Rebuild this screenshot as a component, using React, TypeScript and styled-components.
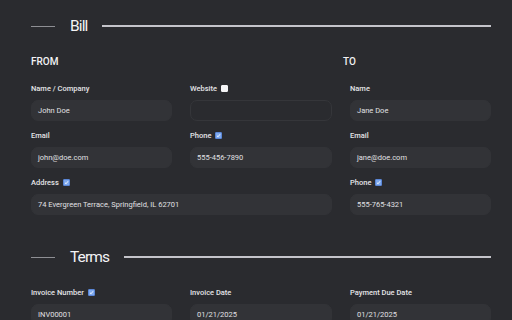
import styled, { createGlobalStyle } from 'styled-components';

const GlobalStyle = createGlobalStyle`
  html, body {
    margin: 0;
    padding: 0;
    background: #2a2b2f;
  }
  body {
    font-family: Roboto, "Noto Sans", sans-serif;
    color: #e8e8ea;
  }
`;

const Page = styled.div`
  width: 512px;
  height: 320px;
  overflow: hidden;
  box-sizing: border-box;
  padding: 16px 21px 0 31px;
  background: #2a2b2f;
`;

const SectionTitle = styled.div<{ $gapAfter: number }>`
  display: flex;
  align-items: center;
  height: 20px;
  margin-bottom: ${(p) => p.$gapAfter}px;

  &::before {
    content: '';
    width: 24px;
    height: 1px;
    background: #8e8f94;
    margin-right: 15px;
  }

  &::after {
    content: '';
    flex: 1;
    height: 1.5px;
    background: #c4c4ca;
    margin-left: 15px;
  }
`;

const TitleText = styled.span`
  font-size: 15.5px;
  font-weight: 400;
  color: #f4f4f6;
  letter-spacing: -0.9px;
`;

const PartyHeads = styled.div`
  display: grid;
  grid-template-columns: 312px 1fr;
  margin-bottom: 15px;
`;

const PartyHead = styled.div`
  font-size: 10px;
  font-weight: 500;
  line-height: 12px;
  color: #f2f2f4;
`;

const Grid = styled.div`
  display: grid;
  grid-template-columns: 141px 142px 141px;
  column-gap: 18px;
  row-gap: 9px;
`;

const Field = styled.div<{ $span?: number }>`
  display: flex;
  flex-direction: column;
  gap: 7px;
  grid-column: span ${(p) => p.$span ?? 1};
`;

const Label = styled.div`
  display: flex;
  align-items: center;
  gap: 4px;
  height: 10px;
  font-size: 7.5px;
  font-weight: 500;
  color: #e4e4e7;
`;

const Box = styled.span<{ $checked: boolean }>`
  display: inline-flex;
  align-items: center;
  justify-content: center;
  width: 7px;
  height: 7px;
  border-radius: 1px;
  box-sizing: border-box;
  background: ${(p) => (p.$checked ? '#7ea9ee' : '#f4f4f6')};
  border: 1px solid ${(p) => (p.$checked ? '#5a86d6' : '#f4f4f6')};
`;

const Input = styled.div<{ $disabled?: boolean }>`
  height: 21px;
  box-sizing: border-box;
  display: flex;
  align-items: center;
  padding: 0 6px;
  border-radius: 7px;
  font-size: 7.5px;
  color: #e0e0e3;
  background: ${(p) => (p.$disabled ? '#2a2b2f' : '#323337')};
  border: 1px solid ${(p) => (p.$disabled ? '#35363a' : '#323337')};
`;

const Spacer = styled.div`
  height: 32px;
`;

const Check = ({ checked }: { checked: boolean }) => (
  <Box $checked={checked}>
    {checked && (
      <svg width="5" height="5" viewBox="0 0 10 10">
        <path d="M2 5.5 L4.2 7.5 L8 2.5" fill="none" stroke="#ffffff" strokeWidth="1.8" />
      </svg>
    )}
  </Box>
);

type FieldProps = {
  label: string;
  value?: string;
  check?: boolean;
  span?: number;
  disabled?: boolean;
};

const FormField = ({ label, value, check, span, disabled }: FieldProps) => (
  <Field $span={span}>
    <Label>
      {label}
      {check !== undefined && <Check checked={check} />}
    </Label>
    <Input $disabled={disabled}>{value}</Input>
  </Field>
);

export const App = () => {
  return (
    <>
      <GlobalStyle />
      <Page>
        <SectionTitle $gapAfter={20}>
          <TitleText>Bill</TitleText>
        </SectionTitle>
        <PartyHeads>
          <PartyHead>FROM</PartyHead>
          <PartyHead>TO</PartyHead>
        </PartyHeads>
        <Grid>
          <FormField label="Name / Company" value="John Doe" />
          <FormField label="Website" check={false} disabled />
          <FormField label="Name" value="Jane Doe" />
          <FormField label="Email" value="john@doe.com" />
          <FormField label="Phone" check value="555-456-7890" />
          <FormField label="Email" value="jane@doe.com" />
          <FormField label="Address" check span={2} value="74 Evergreen Terrace, Springfield, IL 62701" />
          <FormField label="Phone" check value="555-765-4321" />
        </Grid>
        <Spacer />
        <SectionTitle $gapAfter={20}>
          <TitleText>Terms</TitleText>
        </SectionTitle>
        <Grid>
          <FormField label="Invoice Number" check value="INV00001" />
          <FormField label="Invoice Date" value="01/21/2025" />
          <FormField label="Payment Due Date" value="01/21/2025" />
        </Grid>
      </Page>
    </>
  );
};

export default App;
